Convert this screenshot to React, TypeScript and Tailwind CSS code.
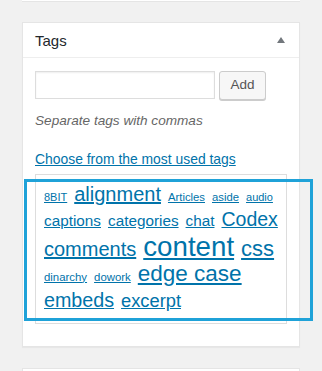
import React from "react";

interface Tag {
  label: string;
  size: string;
}

// one entry per line of the cloud, the way it wraps in the sidebar
const tagRows: { gap: string; tags: Tag[] }[] = [
  {
    gap: "mt-0",
    tags: [
      { label: "8BIT", size: "text-[11px]" },
      { label: "alignment", size: "text-[20px]" },
      { label: "Articles", size: "text-[11.3px]" },
      { label: "aside", size: "text-[11.3px]" },
      { label: "audio", size: "text-[11px]" }
    ]
  },
  {
    gap: "mt-[5.5px]",
    tags: [
      { label: "captions", size: "text-[15.3px]" },
      { label: "categories", size: "text-[15.3px]" },
      { label: "chat", size: "text-[15.3px]" },
      { label: "Codex", size: "text-[19.5px]" }
    ]
  },
  {
    gap: "mt-[4px]",
    tags: [
      { label: "comments", size: "text-[20px]" },
      { label: "content", size: "text-[27.7px]" },
      { label: "css", size: "text-[22px]" }
    ]
  },
  {
    gap: "mt-[2px]",
    tags: [
      { label: "dinarchy", size: "text-[11.4px]" },
      { label: "dowork", size: "text-[11.4px]" },
      { label: "edge case", size: "text-[22.5px]" }
    ]
  },
  {
    gap: "mt-[6px]",
    tags: [
      { label: "embeds", size: "text-[19.7px]" },
      { label: "excerpt", size: "text-[18.3px]" }
    ]
  }
];

export default function App() {
  return (
    <div className="relative h-[371px] w-[322px] overflow-hidden bg-[#f1f1f1] font-['Liberation_Sans',Arial,sans-serif]">
      {/* bottom of the box above */}
      <div className="mx-[22px] h-[2px] border-b border-[#e5e5e5] bg-white" />

      {/* Tags meta box */}
      <div className="mx-[22px] mt-[20px] border border-[#e5e5e5] bg-white shadow-[0_1px_1px_rgba(0,0,0,0.04)]">
        <div className="flex h-[35px] items-center justify-between border-b border-[#eee] pl-[12px] pr-[14px]">
          <h2 className="text-[15px] leading-none text-[#23282d]">Tags</h2>
          <svg width="8" height="6" viewBox="0 0 8 6">
            <path d="M4 0 L8 6 H0 Z" fill="#72777c" />
          </svg>
        </div>

        <div className="px-[12px] pb-[22px] pt-[13px]">
          <div className="flex items-start gap-[4px]">
            <input
              type="text"
              className="h-[28px] w-[180px] border border-[#ddd] bg-white px-2 shadow-[inset_0_1px_2px_rgba(0,0,0,0.07)] outline-none"
            />
            <button
              type="button"
              className="h-[29px] w-[47px] rounded-[3px] border border-[#ccc] bg-[#f7f7f7] text-[13.5px] text-[#555] shadow-[0_1px_0_#ccc]"
            >
              Add
            </button>
          </div>

          <p className="mt-[11px] text-[13.6px] italic leading-[20px] text-[#666]">
            Separate tags with commas
          </p>

          <a
            href="#"
            className="mt-[18px] block text-[13.9px] leading-[20px] text-[#0073aa] underline"
          >
            Choose from the most used tags
          </a>

          <div className="mt-[5px] border border-[#ddd] px-[8px] pb-[12px] pt-[9px]">
            {tagRows.map((row, i) => (
              <div key={i} className={`flex items-baseline gap-x-[7px] ${row.gap}`}>
                {row.tags.map((tag) => (
                  <a
                    key={tag.label}
                    href="#"
                    className={`${tag.size} whitespace-nowrap leading-none text-[#0073aa] underline`}
                  >
                    {tag.label}
                  </a>
                ))}
              </div>
            ))}
          </div>
        </div>
      </div>

      {/* top of the next box */}
      <div className="mx-[22px] mt-[21px] h-[20px] border border-[#e5e5e5] bg-white" />

      {/* highlight drawn over the cloud */}
      <div className="pointer-events-none absolute left-[24px] top-[179px] h-[142px] w-[289px] border-[3px] border-[#1fa2d8]" />
    </div>
  );
}
